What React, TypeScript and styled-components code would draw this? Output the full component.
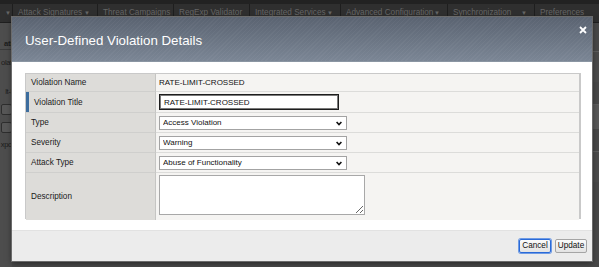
import { createGlobalStyle, styled } from 'styled-components'

const GlobalStyle = createGlobalStyle`
  html, body {
    margin: 0;
    padding: 0;
    background: #484848;
    font-family: 'Liberation Sans', Arial, Helvetica, sans-serif;
  }
`

const Page = styled.div`
  position: relative;
  width: 599px;
  height: 267px;
  overflow: hidden;
  background: #484848;
`

const TopStrip = styled.div`
  height: 4px;
  background: #222;
`

const NavBar = styled.div`
  display: flex;
  height: 18px;
  background: #2f2f2f;
  border-bottom: 1px solid #1f1f1f;
`

const Tab = styled.div<{ $w: number }>`
  display: flex;
  justify-content: space-between;
  box-sizing: border-box;
  width: ${(p) => p.$w}px;
  flex-shrink: 0;
  padding: 4px 7px 0 5px;
  border-right: 1px solid #1e1e1e;
  color: #666;
  font-size: 8.2px;
  line-height: 10px;
  white-space: nowrap;
`

const Caret = styled.span`
  color: #666;
  font-size: 6px;
`

const Backdrop = styled.div`
  display: flex;
  justify-content: space-between;
  height: 244px;
`

const SideFrag = styled.div`
  width: 12px;
  display: flex;
  flex-direction: column;
  align-items: flex-end;
  color: #1c1c1c;
  font-size: 7.6px;
  line-height: 11px;
  letter-spacing: -0.3px;
  background: #4d4d4d;
`

const FragText = styled.div<{ $mt: number; $bold?: boolean; $line?: boolean }>`
  margin-top: ${(p) => p.$mt}px;
  white-space: nowrap;
  font-weight: ${(p) => (p.$bold ? 700 : 400)};
  align-self: stretch;
  text-align: right;
  border-bottom: ${(p) => (p.$line ? '1px solid #3a3a3a' : 'none')};
`

const FragBox = styled.div<{ $mt: number }>`
  margin-top: ${(p) => p.$mt}px;
  width: 9px;
  height: 9px;
  border: 1px solid #2e2e2e;
  border-radius: 2px;
  background: #575757;
`

const RightFrag = styled.div`
  width: 7px;
  display: flex;
  flex-direction: column;
  gap: 22px;
  padding-top: 28px;
`

const RightBlock = styled.div<{ $h: number; $light?: boolean }>`
  height: ${(p) => p.$h}px;
  border-top: 1px solid #5e5e5e;
  background: ${(p) => (p.$light ? '#585858' : '#4b4b4b')};
`

const Modal = styled.div`
  position: absolute;
  left: 12px;
  top: 17px;
  width: 580px;
  height: 244px;
  display: flex;
  flex-direction: column;
  background: #fff;
  box-shadow: 0 0 0 1px #6b6b6b, 0 2px 6px rgba(0, 0, 0, 0.5);
`

const Header = styled.div`
  position: relative;
  height: 45px;
  flex-shrink: 0;
  box-sizing: border-box;
  padding: 18px 0 0 13px;
  background:
    repeating-linear-gradient(135deg, rgba(255, 255, 255, 0.035) 0 1px, transparent 1px 3px),
    linear-gradient(#5a6371, #7b8695);
  border-bottom: 1px solid #8b96a3;
`

const Title = styled.h2`
  margin: 0;
  color: #fff;
  font-size: 13.3px;
  font-weight: 400;
  line-height: 12px;
`

const CloseButton = styled.svg`
  position: absolute;
  right: 5px;
  top: 9px;
  cursor: pointer;
`

const Body = styled.div`
  flex: 1;
  padding: 11px 11px 0 13px;
`

const Table = styled.div`
  display: grid;
  grid-template-columns: 130px 1fr;
  grid-template-rows: 18px 21px 20px 20px 20px 47px;
  border: 1px solid #c9c9c9;
  border-right-width: 2px;
  box-sizing: border-box;
  width: 556px;
  height: 146px;
`

const Label = styled.div<{ $active?: boolean }>`
  display: flex;
  align-items: center;
  padding-left: ${(p) => (p.$active ? 8 : 5)}px;
  background: #dddcd9;
  border-bottom: 1px solid #cfcfcd;
  border-right: 1px solid #c5c5c3;
  color: #1a1a1a;
  font-size: 8.2px;
  box-shadow: ${(p) => (p.$active ? 'inset 3px 0 0 #3d6d9e' : 'none')};
  &:nth-last-child(2) {
    border-bottom: none;
  }
`

const Value = styled.div<{ $top?: boolean }>`
  display: flex;
  align-items: ${(p) => (p.$top ? 'flex-start' : 'center')};
  padding: ${(p) => (p.$top ? '2px 0 0 3px' : '0 0 0 3px')};
  background: #f5f4f2;
  border-bottom: 1px solid #dcdcda;
  color: #111;
  font-size: 8px;
  &:last-child {
    border-bottom: none;
  }
`

const TextInput = styled.input`
  box-sizing: border-box;
  width: 180px;
  height: 16px;
  margin: 0;
  padding: 0 0 0 4px;
  border: 1px solid #1d1d1d;
  box-shadow: inset 0 0 0 1px #7a7a7a;
  font-family: inherit;
  font-size: 8px;
  color: #111;
  background: #fff;
  outline: none;
`

const SelectWrap = styled.div`
  position: relative;
  width: 188px;
  height: 14px;
`

const Select = styled.select`
  appearance: none;
  box-sizing: border-box;
  width: 100%;
  height: 100%;
  margin: 0;
  padding: 0 0 0 3px;
  border: 1px solid #a3a3a3;
  border-radius: 0;
  background: #fff;
  font-family: inherit;
  font-size: 8px;
  color: #111;
  outline: none;
`

const Chevron = styled.svg`
  position: absolute;
  right: 5px;
  top: 5px;
  pointer-events: none;
`

const TextArea = styled.textarea`
  box-sizing: border-box;
  width: 206px;
  height: 40px;
  margin: 0;
  border: 1px solid #a8a8a8;
  background: #fff;
  font-family: inherit;
  font-size: 8px;
  outline: none;
`

const Footer = styled.div`
  height: 30px;
  flex-shrink: 0;
  display: flex;
  justify-content: flex-end;
  align-items: center;
  gap: 4px;
  padding-right: 5px;
  background: #ececec;
  border-top: 1px solid #e2e2e2;
`

const Button = styled.button<{ $focused?: boolean }>`
  box-sizing: border-box;
  width: 32px;
  height: 14px;
  margin: 0;
  padding: 0;
  border: 1px solid ${(p) => (p.$focused ? '#2a6ad8' : '#a5a5a5')};
  border-radius: 2px;
  box-shadow: ${(p) => (p.$focused ? '0 0 0 1px #6f9be4' : 'none')};
  background: linear-gradient(#fbfbfb, #e3e3e3);
  color: #111;
  font-family: inherit;
  font-size: 8.2px;
  line-height: 12px;
  cursor: pointer;
`

const tabs = [
  { w: 12, label: '', caret: true },
  { w: 85, label: 'Attack Signatures', caret: true },
  { w: 76, label: 'Threat Campaigns', caret: false },
  { w: 76, label: 'RegExp Validator', caret: false },
  { w: 91, label: 'Integrated Services', caret: true },
  { w: 107, label: 'Advanced Configuration', caret: true },
  { w: 87, label: 'Synchronization', caret: true },
  { w: 65, label: 'Preferences', caret: false },
]

const DropDown = ({ value }: { value: string }) => (
  <SelectWrap>
    <Select defaultValue={value}>
      <option>{value}</option>
    </Select>
    <Chevron width='6' height='5' viewBox='0 0 6 5'>
      <path d='M0.6 1 L3 3.6 L5.4 1' fill='none' stroke='#111' strokeWidth='1.6' />
    </Chevron>
  </SelectWrap>
)

const App = () => {
  return (
    <Page>
      <GlobalStyle />
      <TopStrip />
      <NavBar>
        {tabs.map((t, i) => (
          <Tab key={i} $w={t.w}>
            <span>{t.label}</span>
            {t.caret && <Caret>▼</Caret>}
          </Tab>
        ))}
      </NavBar>
      <Backdrop>
        <SideFrag>
          <FragText $mt={15} $bold $line>
            ati
          </FragText>
          <FragText $mt={7}>olat</FragText>
          <FragText $mt={18}>lt-l</FragText>
          <FragBox $mt={7} />
          <FragBox $mt={7} />
          <FragText $mt={6}>xpo</FragText>
        </SideFrag>
        <RightFrag>
          <RightBlock $h={30} />
          <RightBlock $h={24} $light />
          <RightBlock $h={30} />
        </RightFrag>
      </Backdrop>

      <Modal>
        <Header>
          <Title>User-Defined Violation Details</Title>
          <CloseButton width='8' height='8' viewBox='0 0 8 8'>
            <path d='M1 1 L7 7 M7 1 L1 7' stroke='#fff' strokeWidth='1.8' />
          </CloseButton>
        </Header>
        <Body>
          <Table>
            <Label>Violation Name</Label>
            <Value>RATE-LIMIT-CROSSED</Value>
            <Label $active>Violation Title</Label>
            <Value>
              <TextInput defaultValue='RATE-LIMIT-CROSSED' />
            </Value>
            <Label>Type</Label>
            <Value>
              <DropDown value='Access Violation' />
            </Value>
            <Label>Severity</Label>
            <Value>
              <DropDown value='Warning' />
            </Value>
            <Label>Attack Type</Label>
            <Value>
              <DropDown value='Abuse of Functionality' />
            </Value>
            <Label>Description</Label>
            <Value $top>
              <TextArea />
            </Value>
          </Table>
        </Body>
        <Footer>
          <Button $focused>Cancel</Button>
          <Button>Update</Button>
        </Footer>
      </Modal>
    </Page>
  )
}

export default App
